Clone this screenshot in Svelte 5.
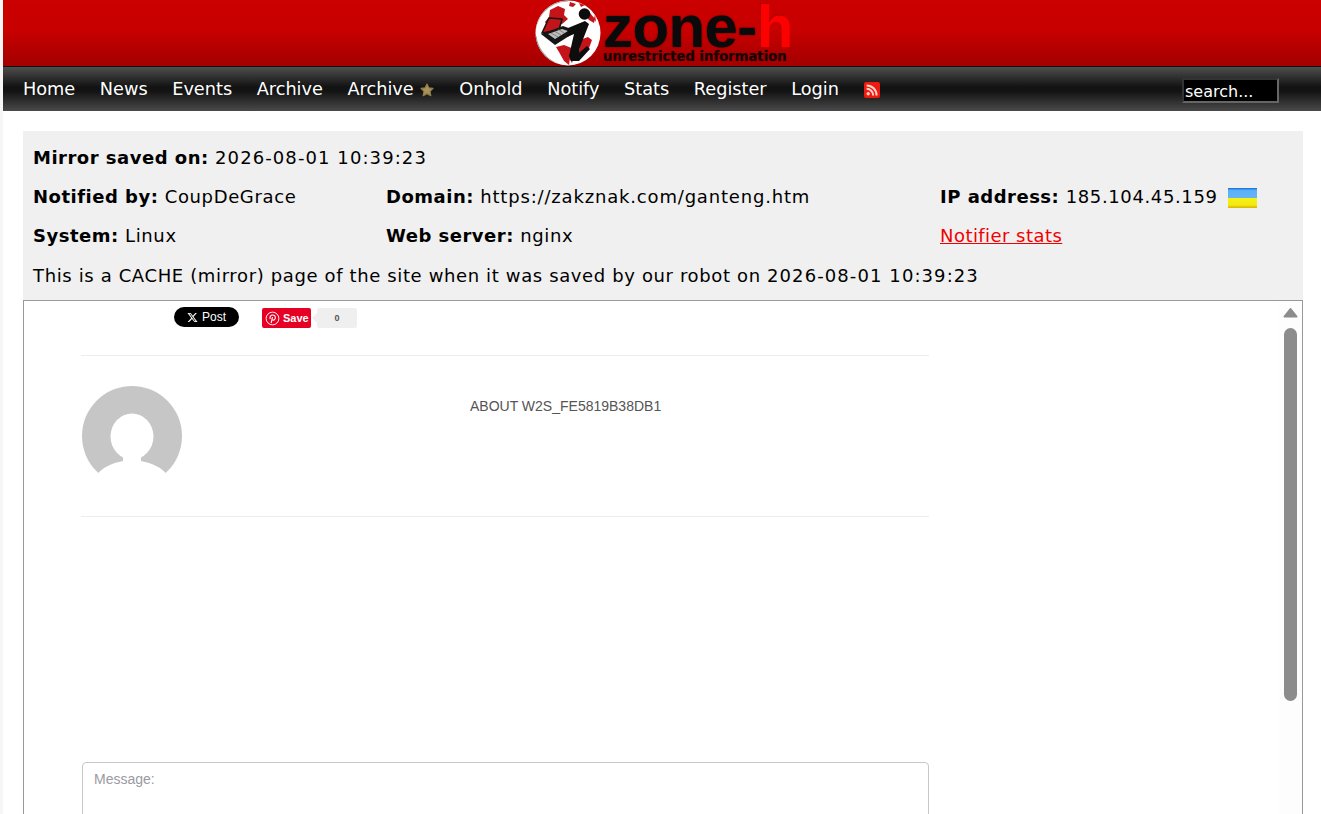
<script>
  const links = ["Home", "News", "Events", "Archive", "Archive", "Onhold", "Notify", "Stats", "Register", "Login"];
</script>

<div class="page">
  <header class="top">
    <div class="logo">
      <svg class="globe" viewBox="0 0 66 66" width="66" height="66" aria-hidden="true">
        <circle cx="33" cy="33" r="32.500" fill="#fff" />
        <path d="M33 .5a32.500 32.500 0 0 0-32 38 32.500 32.500 0 0 1 32-37z" fill="#aaa" />
        <path d="M.5 36a32.500 32.500 0 0 0 24 28 34 34 0 0 1-23-28z" fill="#999" />
        <path d="M15 10l8-4 7 3-1 6 4 4-6 5-9-2-5 5-3-5 4-5zM35 2l6 2-3 3-4-1zM21 47l8-2 10 4 1 7-5 2-1 7-5-4-5-9zM45 40l8-3 4 3-3 8-5 6-6 1 2-7zM55 13l5 6-1 4-5-3-3-4z" fill="#c4141a" />
        <path d="M60 14l1 8-2-3zM44 3l6 2-4 2zM34 58l5-1-2 6z" fill="#c4141a" />
        <path d="M7 33L14 18l13 1-3 11z" fill="#c4141a" stroke="#151515" stroke-width="1.600" stroke-linejoin="round" />
        <path d="M6 34l14 11 22-14-14-5z" fill="#151515" />
        <path d="M13 34l7 5 13-8-6-2z" fill="#bdbdbd" />
        <path d="M16 33l7 4M19 31l7 4M23 29l6 4" stroke="#555" stroke-width=".6" />
        <circle cx="49.500" cy="14" r="5.800" fill="#0d0d0d" />
        <path d="M33 28l17-7 4 3-9 23-1 6 8-7 3 3-11 12h-8l-2-5 5-22-7 3z" fill="#0d0d0d" />
      </svg>
      <div class="brand">
        <div class="name">zone-<span>h</span></div>
        <div class="tag">unrestricted information</div>
      </div>
    </div>
  </header>

  <nav class="menu">
    <ul>
      {#each links as link, i}
        <li>
          <a href="/">{link}</a>
          {#if i === 4}
            <svg class="star" viewBox="0 0 16 16" width="16" height="16" aria-hidden="true">
              <path d="M8 2l1.800 3.800 4.200.6-3 3 .8 4.300L8 11.600l-3.800 2.100.8-4.300-3-3 4.200-.6z" fill="#a8935a" stroke="#8f7c4a" stroke-width="1.200" stroke-linejoin="round" />
            </svg>
          {/if}
        </li>
      {/each}
      <li>
        <svg class="rss" viewBox="0 0 16 16" width="16" height="16" aria-hidden="true">
          <rect width="16" height="16" rx="2" fill="#ee1a0f" />
          <circle cx="4.200" cy="11.800" r="1.700" fill="#ffd2c8" />
          <path d="M2.600 6.800a6.600 6.600 0 0 1 6.600 6.600M2.600 3.400a10 10 0 0 1 10 10" fill="none" stroke="#ffd2c8" stroke-width="2" />
        </svg>
      </li>
    </ul>
    <input class="search" type="text" value="search..." />
  </nav>

  <main class="body">
    <section class="info">
      <div class="row"><div><b>Mirror saved on:</b> <span class="num">2026-08-01 10:39:23</span></div></div>
      <div class="row cols">
        <div><b>Notified by:</b> CoupDeGrace</div>
        <div><b>Domain:</b> <span class="url">https://zakznak.com/ganteng.htm</span></div>
        <div><b>IP address:</b> 185.104.45.159 <span class="flag"></span></div>
      </div>
      <div class="row cols">
        <div><b>System:</b> Linux</div>
        <div><b>Web server:</b> nginx</div>
        <div><a href="/">Notifier stats</a></div>
      </div>
      <div class="row note"><div>This is a CACHE (mirror) page of the site when it was saved by our robot on <span class="num">2026-08-01 10:39:23</span></div></div>
    </section>

    <section class="frame">
      <div class="mirror">
        <div class="share">
          <span class="xpost">
            <svg viewBox="0 0 24 24" width="11" height="11" aria-hidden="true">
              <path d="M18.200 2h3.400l-7.400 8.500L23 22h-6.800l-5.300-7-6.100 7H1.400l7.900-9.100L1 2h7l4.800 6.400zm-1.200 18h1.900L7 3.900H5z" fill="#fff" />
            </svg>
            Post
          </span>
          <span class="pin">
            <svg viewBox="0 0 16 16" width="15" height="15" aria-hidden="true">
              <circle cx="8" cy="8" r="6.800" fill="none" stroke="#fff" stroke-width="1" />
              <path d="M6.500 13l1.500-6.500M5.600 8.500C4.600 6 6.300 4.300 8.200 4.300c2 0 3.100 1.400 2.800 3.200-.3 1.900-2.200 3-3.400 1.700" fill="none" stroke="#fff" stroke-width="1.200" />
            </svg>
            Save
          </span>
          <span class="count">0</span>
        </div>

        <div class="author">
          <svg class="avatar" viewBox="0 0 100 100" width="100" height="100" aria-hidden="true">
            <circle cx="50" cy="50" r="50" fill="#c6c6c6" />
            <ellipse cx="50" cy="50.500" rx="21.500" ry="23" fill="#fff" />
            <path d="M15 89C19 82 30 77 41 75V60H59V75C70 77 81 82 85 89V101H15z" fill="#fff" />
          </svg>
          <p>ABOUT W2S_FE5819B38DB1</p>
        </div>

        <div class="message">Message:</div>
      </div>

      <div class="scroll">
        <svg viewBox="0 0 15 11" width="15" height="11" aria-hidden="true">
          <path d="M7.500 2L13.500 9.500H1.500z" fill="#8c8c8c" stroke="#8c8c8c" stroke-width="2" stroke-linejoin="round" />
        </svg>
        <span class="thumb"></span>
      </div>
    </section>
  </main>
</div>

<style>
  :global(body) {
    background: #f6f6f6;
    overflow: hidden;
  }

  .page {
    margin-left: 3px;
    height: 814px;
    overflow: hidden;
    background: #fff;
    font-family: "DejaVu Sans", Verdana, sans-serif;
  }

  .top {
    height: 66px;
    display: flex;
    justify-content: center;
    background: linear-gradient(#cb0000 0%, #c80000 45%, #a30000 100%);
    border-bottom: 1px solid #111;
  }

  .logo {
    display: flex;
    gap: 2px;
    margin-left: 4px;
    width: 258px;
  }

  .globe {
    flex: none;
  }

  .brand {
    position: relative;
    flex: 1;
  }

  .name {
    position: absolute;
    top: 4px;
    left: 0;
    font: bold 60px/46px "Liberation Sans", Arial, sans-serif;
    letter-spacing: -.6px;
    color: #0a0a0a;
    text-shadow: 0 0 2px #5a0000;
    white-space: nowrap;
  }

  .name span {
    color: #ff0000;
    text-shadow: -1px -1px 1px #a80000;
  }

  .tag {
    position: absolute;
    top: 50px;
    left: 0;
    font: bold 13.200px/13px "DejaVu Sans", sans-serif;
    color: #1a0000;
    text-shadow: 0 0 1px #600000;
    white-space: nowrap;
  }

  .menu {
    height: 44px;
    display: flex;
    align-items: center;
    justify-content: space-between;
    padding: 0 42px 0 20px;
    background: linear-gradient(#4e4e4e 0%, #131313 45%, #131313 55%, #4a4a4a 100%);
  }

  ul {
    display: flex;
    align-items: center;
    gap: 24.600px;
    margin: -1px 0 0;
    padding: 0;
    list-style: none;
  }

  li {
    display: flex;
    align-items: center;
    gap: 5px;
  }

  .menu a {
    color: #fff;
    font-size: 17.700px;
    text-decoration: none;
  }

  .star {
    margin-top: 2px;
  }

  .rss {
    display: block;
    margin-top: 2px;
  }

  .search {
    box-sizing: border-box;
    width: 97px;
    height: 25px;
    margin-top: 2px;
    padding: 2px 1px 0;
    border: 2px solid;
    border-color: #333 #666 #666 #333;
    background: #000;
    color: #fff;
    font: 16px "DejaVu Sans", sans-serif;
  }

  .body {
    padding: 20px 18px 0 20px;
  }

  .info {
    padding-left: 10px;
    height: 169px;
    background: #f0f0f0;
    color: #000;
    font-size: 18px;
    letter-spacing: .63px;
    box-sizing: border-box;
    padding-top: 7px;
  }

  .info b {
    letter-spacing: .5px;
  }

  .info .num {
    letter-spacing: 1.090px;
  }

  .info .url {
    letter-spacing: .82px;
  }

  .row {
    height: 39px;
    display: flex;
    align-items: center;
  }

  .cols {
    display: grid;
    grid-template-columns: 353px 554px 1fr;
  }

  .note {
    height: 40px;
  }

  .flag {
    display: inline-block;
    width: 29px;
    height: 20px;
    margin-left: 4px;
    vertical-align: -5px;
    box-sizing: border-box;
    background: linear-gradient(#0f6fe0 0%, #5ab0f5 12%, #64b4f5 48%, #f5f018 52%, #f2ea10 85%, #d8b000 100%);
  }

  .info a {
    color: #f00000;
    letter-spacing: .45px;
  }

  .frame {
    display: flex;
    height: 600px;
    border: 1px solid #999;
    background: #fff;
  }

  .mirror {
    flex: 1;
    padding-left: 57px;
    font-family: "Liberation Sans", Arial, sans-serif;
  }

  .share {
    display: flex;
    align-items: flex-start;
    width: 848px;
    height: 55px;
    padding: 6px 0 0 93px;
    box-sizing: border-box;
    border-bottom: 1px solid #ececec;
  }

  .xpost {
    display: flex;
    align-items: center;
    justify-content: center;
    gap: 4px;
    width: 65px;
    height: 20px;
    border-radius: 10px;
    background: #000;
    color: #fff;
    font-size: 12px;
  }

  .pin {
    display: flex;
    align-items: center;
    gap: 3px;
    box-sizing: border-box;
    width: 49px;
    height: 20px;
    margin: 1px 6px 0 23px;
    padding-left: 3px;
    border-radius: 2px;
    background: #e60023;
    color: #fff;
    font-size: 11px;
    font-weight: bold;
  }

  .count {
    position: relative;
    width: 40px;
    height: 20px;
    margin-top: 1px;
    border-radius: 2px;
    background: #efefef;
    color: #555;
    font-size: 9px;
    font-weight: bold;
    line-height: 20px;
    text-align: center;
  }

  .count::before {
    content: "";
    position: absolute;
    left: -5px;
    top: 5px;
    border: 5px solid transparent;
    border-left: 0;
    border-right-color: #efefef;
  }

  .author {
    display: flex;
    width: 848px;
    height: 161px;
    box-sizing: border-box;
    padding: 30px 0 0 1px;
    border-bottom: 1px solid #ececec;
  }

  .avatar {
    flex: none;
  }

  .author p {
    flex: 1;
    margin: 13px 0 0;
    padding-left: 288px;
    color: #555;
    font-size: 14px;
    line-height: 14px;
  }

  .message {
    box-sizing: border-box;
    width: 847px;
    height: 120px;
    margin: 245px 0 0 1px;
    padding: 8px 11px;
    border: 1px solid #c8c8c8;
    border-radius: 4px;
    color: #9a9aa2;
    font-size: 14px;
    line-height: 16px;
  }

  .scroll {
    flex: none;
    display: flex;
    flex-direction: column;
    align-items: center;
    width: 23px;
    padding-top: 6px;
    box-sizing: border-box;
    background: #fdfdfd;
  }

  .scroll svg {
    flex: none;
  }

  .thumb {
    width: 13px;
    height: 373px;
    margin-top: 10px;
    border-radius: 7px;
    background: #8c8c8c;
  }
</style>
